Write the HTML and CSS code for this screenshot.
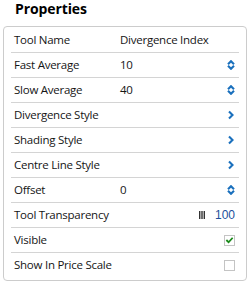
FILE: index.html
```html
<!DOCTYPE html>
<html>
<head>
<meta charset="utf-8">
<link rel="stylesheet" href="styles.css">
</head>
<body>
<h1 class="title">Properties</h1>
<div class="panel">
  <div class="row"><span class="label">Tool Name</span><span class="value">Divergence Index</span><span class="ctl"></span></div>
  <div class="row"><span class="label">Fast Average</span><span class="value">10</span><span class="ctl">
    <svg class="spin" width="8" height="10" viewBox="0 0 8 10"><path d="M1 4.2 L4 1.2 L7 4.2 M1 5.8 L4 8.8 L7 5.8" /></svg></span></div>
  <div class="row"><span class="label">Slow Average</span><span class="value">40</span><span class="ctl">
    <svg class="spin" width="8" height="10" viewBox="0 0 8 10"><path d="M1 4.2 L4 1.2 L7 4.2 M1 5.8 L4 8.8 L7 5.8" /></svg></span></div>
  <div class="row"><span class="label">Divergence Style</span><span class="value"></span><span class="ctl">
    <svg class="chev" width="8" height="10" viewBox="0 0 8 10"><path d="M2 1.5 L5.5 5 L2 8.5" /></svg></span></div>
  <div class="row"><span class="label">Shading Style</span><span class="value"></span><span class="ctl">
    <svg class="chev" width="8" height="10" viewBox="0 0 8 10"><path d="M2 1.5 L5.5 5 L2 8.5" /></svg></span></div>
  <div class="row"><span class="label">Centre Line Style</span><span class="value"></span><span class="ctl">
    <svg class="chev" width="8" height="10" viewBox="0 0 8 10"><path d="M2 1.5 L5.5 5 L2 8.5" /></svg></span></div>
  <div class="row"><span class="label">Offset</span><span class="value">0</span><span class="ctl">
    <svg class="spin" width="8" height="10" viewBox="0 0 8 10"><path d="M1 4.2 L4 1.2 L7 4.2 M1 5.8 L4 8.8 L7 5.8" /></svg></span></div>
  <div class="row"><span class="label">Tool Transparency</span><span class="value"></span><span class="ctl">
    <span class="slider"><svg width="6" height="8" viewBox="0 0 6 8"><rect x="0" y="0" width="1.4" height="8"/><rect x="2.3" y="0" width="1.4" height="8"/><rect x="4.6" y="0" width="1.4" height="8"/></svg><span class="pct">100</span></span></span></div>
  <div class="row"><span class="label">Visible</span><span class="value"></span><span class="ctl">
    <span class="check"><svg width="10" height="10" viewBox="0 0 10 10"><path d="M1.5 5 L4 7.5 L8.5 2.5" /></svg></span></span></div>
  <div class="row"><span class="label">Show In Price Scale</span><span class="value"></span><span class="ctl">
    <span class="check"></span></span></div>
</div>
</body>
</html>
```

FILE: styles.css
```css
html, body {
  margin: 0;
  padding: 0;
  background: #ffffff;
}
body {
  font-family: "Open Sans", "DejaVu Sans", sans-serif;
  color: #151515;
  width: 250px;
  height: 284px;
  overflow: hidden;
}
.title {
  margin: 0 0 9px 0;
  padding-left: 15px;
  font-size: 14px;
  font-weight: 700;
  line-height: 17px;
  letter-spacing: -0.1px;
  color: #000000;
}
.panel {
  margin: 0 3px;
  border: 1px solid #cccccc;
  border-radius: 4px;
  padding: 1px 0 3px 0;
}
.row {
  margin: 0 7px;
  height: 24px;
  line-height: 24px;
  font-size: 11.5px;
  letter-spacing: -0.25px;
  display: grid;
  grid-template-columns: 106px 1fr auto;
  align-items: center;
  padding-left: 3px;
  padding-right: 4px;
  border-bottom: 1px solid #d4d4d4;
}
.row:last-child {
  border-bottom: none;
}
.label {
  white-space: nowrap;
}
.value {
  white-space: nowrap;
}
.ctl {
  display: flex;
  align-items: center;
  justify-content: flex-end;
  height: 24px;
}
.spin path, .chev path {
  fill: none;
  stroke: #1a70bd;
  stroke-width: 2.1;
}
.slider {
  display: flex;
  align-items: center;
  gap: 10px;
}
.slider svg rect {
  fill: #333333;
}
.pct {
  font-family: "Liberation Sans", Arial, sans-serif;
  font-size: 12px;
  letter-spacing: 0;
  color: #1c4f9c;
}
.check {
  display: flex;
  align-items: center;
  justify-content: center;
  width: 9px;
  height: 9px;
  border: 1px solid #c4c4c4;
}
.check path {
  fill: none;
  stroke: #1b8a1b;
  stroke-width: 2;
}
```
